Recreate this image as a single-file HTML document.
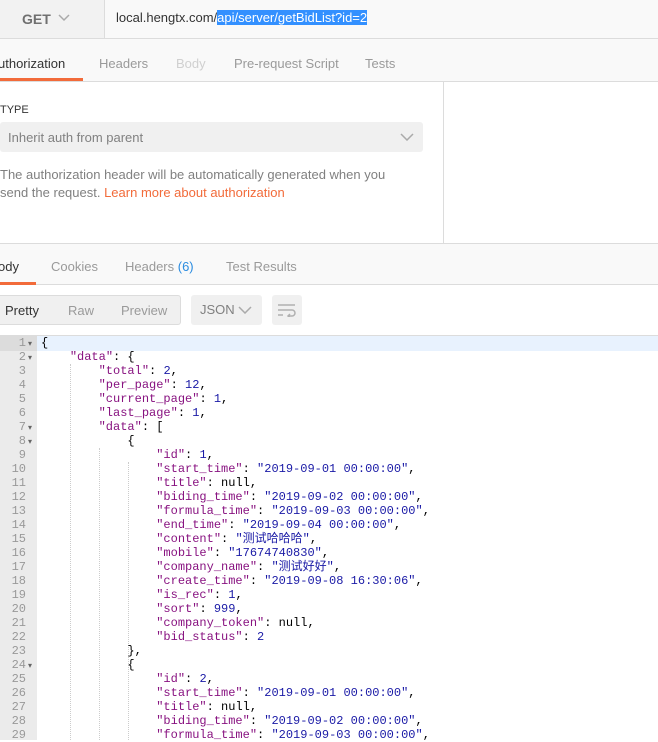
<!DOCTYPE html>
<html><head><meta charset="utf-8"><style>
*{margin:0;padding:0;box-sizing:border-box}
body{width:658px;height:739px;overflow:hidden;background:#fff;font-family:"Liberation Sans","Noto Sans CJK SC",sans-serif;position:relative;color:#505050}
.abs{position:absolute}
.top{left:0;top:0;width:658px;height:39px;background:#f9f9f9;border-bottom:1px solid #dcdcdc}
.get{left:0;top:0;width:105px;height:38px;background:#f2f2f2;border-right:1px solid #dcdcdc;font-size:14px;font-weight:bold;color:#707070}
.url{left:116px;top:10px;font-size:13px;color:#333}
.sel{background:#3390ff;color:#fff}
.tabs{left:0;top:39px;width:658px;height:43px;background:#f9f9f9;border-bottom:1px solid #dcdcdc;font-size:13px}
.tab{position:absolute;top:17px;color:#9a9a9a}
.auth{left:0;top:82px;width:444px;height:162px;border-right:1px solid #dcdcdc}
.rtabs{left:0;top:243px;width:658px;height:42px;background:#f9f9f9;border-top:1px solid #dcdcdc;border-bottom:1px solid #dcdcdc;font-size:13px}
.btn{background:#f0f0f0;border-radius:3px;font-size:13px;color:#9a9a9a}
.ed{left:0;top:335px;width:658px;height:404px;border-top:1px solid #dcdcdc}
.gut{left:0;top:0;width:37px;height:404px;background:#ebebeb}
pre{font-family:"Liberation Mono","Noto Sans CJK SC",monospace;font-size:12px;line-height:14px;color:#000}
.k{color:#881280}.s{color:#1a1aa6}.n{color:#1a1aa6}
.ln{font-family:"Liberation Mono",monospace;font-size:12px;line-height:14px;color:#999;text-align:right;width:26px}
.fold{font-size:8px;color:#666;line-height:14px}
</style></head><body>
<div class="abs top"></div>
<div class="abs get"><span class="abs" style="left:22px;top:11px">GET</span>
<svg class="abs" style="left:58px;top:14px" width="12" height="8"><path d="M1 1l5 5 5-5" fill="none" stroke="#aaa" stroke-width="1.5"/></svg></div>
<div class="abs url">local.hengtx.com/<span class="sel">api/server/getBidList?id=2</span></div>
<div class="abs tabs">
<span class="tab" style="left:-2px;color:#333">uthorization</span>
<div class="abs" style="left:0;top:39px;width:83px;height:3px;background:#f26b3a"></div>
<span class="tab" style="left:99px">Headers</span>
<span class="tab" style="left:176px;color:#d0d0d0">Body</span>
<span class="tab" style="left:234px">Pre-request Script</span>
<span class="tab" style="left:365px">Tests</span>
</div>
<div class="abs auth">
<div class="abs" style="left:0;top:22px;font-size:11px;color:#333">TYPE</div>
<div class="abs btn" style="left:0;top:40px;width:423px;height:30px"><span class="abs" style="left:8px;top:8px;color:#808080">Inherit auth from parent</span>
<svg class="abs" style="left:400px;top:11px" width="14" height="8"><path d="M1 1l6 6 6-6" fill="none" stroke="#aaa" stroke-width="1.5"/></svg></div>
<div class="abs" style="left:0;top:84px;font-size:13px;line-height:18px;color:#808080;width:412px">The authorization header will be automatically generated when you send the request. <span style="color:#f26b3a">Learn more about authorization</span></div>
</div>
<div class="abs rtabs">
<span class="tab" style="left:-2px;top:15px;color:#333">ody</span>
<div class="abs" style="left:0;top:38px;width:36px;height:3px;background:#f26b3a"></div>
<span class="tab" style="left:51px;top:15px">Cookies</span>
<span class="tab" style="left:125px;top:15px">Headers <span style="color:#2b8ce0">(6)</span></span>
<span class="tab" style="left:226px;top:15px">Test Results</span>
</div>
<div class="abs btn" style="left:-3px;top:295px;width:184px;height:30px;border:1px solid #dcdcdc"><span class="abs" style="left:7px;top:7px;color:#333">Pretty</span><span class="abs" style="left:70px;top:7px">Raw</span><span class="abs" style="left:123px;top:7px">Preview</span></div>
<div class="abs btn" style="left:191px;top:295px;width:71px;height:30px"><span class="abs" style="left:9px;top:7px;color:#808080">JSON</span>
<svg class="abs" style="left:47px;top:11px" width="14" height="8"><path d="M1 1l6 6 6-6" fill="none" stroke="#aaa" stroke-width="1.5"/></svg></div>
<div class="abs btn" style="left:272px;top:295px;width:30px;height:30px">
<svg class="abs" style="left:5px;top:8px" width="20" height="14"><path d="M1 2h17M1 7h14a3 3 0 010 6h-4M13 11l-2 2 2 2M1 12h5" fill="none" stroke="#b0b0b0" stroke-width="1.5"/></svg></div>
<div class="abs ed">
<div class="abs" style="left:0;top:0;width:658px;height:15px;background:#e8f2fe"></div>
<div class="abs gut"></div>
<div class="abs" style="left:0;top:0;width:37px;height:15px;background:#dcdcdc"></div>
<div class="abs ln" style="left:0;top:0"><div>1</div><div>2</div><div>3</div><div>4</div><div>5</div><div>6</div><div>7</div><div>8</div><div>9</div><div>10</div><div>11</div><div>12</div><div>13</div><div>14</div><div>15</div><div>16</div><div>17</div><div>18</div><div>19</div><div>20</div><div>21</div><div>22</div><div>23</div><div>24</div><div>25</div><div>26</div><div>27</div><div>28</div><div>29</div></div>
<div class="abs fold" style="left:28px;top:1px">
<div>▾</div><div>▾</div><div>&nbsp;</div><div>&nbsp;</div><div>&nbsp;</div><div>&nbsp;</div><div>▾</div><div>▾</div>
<div>&nbsp;</div><div>&nbsp;</div><div>&nbsp;</div><div>&nbsp;</div><div>&nbsp;</div><div>&nbsp;</div><div>&nbsp;</div><div>&nbsp;</div><div>&nbsp;</div><div>&nbsp;</div><div>&nbsp;</div><div>&nbsp;</div><div>&nbsp;</div><div>&nbsp;</div><div>&nbsp;</div><div>▾</div></div>
<div class="abs" style="left:70px;top:28px;height:376px;border-left:1px dotted #ccc"></div>
<div class="abs" style="left:99px;top:112px;height:292px;border-left:1px dotted #ccc"></div>
<div class="abs" style="left:128px;top:126px;height:278px;border-left:1px dotted #ccc"></div>
<pre class="abs" style="left:41px;top:0">{
    <span class="k">"data"</span>: {
        <span class="k">"total"</span>: <span class="n">2</span>,
        <span class="k">"per_page"</span>: <span class="n">12</span>,
        <span class="k">"current_page"</span>: <span class="n">1</span>,
        <span class="k">"last_page"</span>: <span class="n">1</span>,
        <span class="k">"data"</span>: [
            {
                <span class="k">"id"</span>: <span class="n">1</span>,
                <span class="k">"start_time"</span>: <span class="s">"2019-09-01 00:00:00"</span>,
                <span class="k">"title"</span>: null,
                <span class="k">"biding_time"</span>: <span class="s">"2019-09-02 00:00:00"</span>,
                <span class="k">"formula_time"</span>: <span class="s">"2019-09-03 00:00:00"</span>,
                <span class="k">"end_time"</span>: <span class="s">"2019-09-04 00:00:00"</span>,
                <span class="k">"content"</span>: <span class="s">"测试哈哈哈"</span>,
                <span class="k">"mobile"</span>: <span class="s">"17674740830"</span>,
                <span class="k">"company_name"</span>: <span class="s">"测试好好"</span>,
                <span class="k">"create_time"</span>: <span class="s">"2019-09-08 16:30:06"</span>,
                <span class="k">"is_rec"</span>: <span class="n">1</span>,
                <span class="k">"sort"</span>: <span class="n">999</span>,
                <span class="k">"company_token"</span>: null,
                <span class="k">"bid_status"</span>: <span class="n">2</span>
            },
            {
                <span class="k">"id"</span>: <span class="n">2</span>,
                <span class="k">"start_time"</span>: <span class="s">"2019-09-01 00:00:00"</span>,
                <span class="k">"title"</span>: null,
                <span class="k">"biding_time"</span>: <span class="s">"2019-09-02 00:00:00"</span>,
                <span class="k">"formula_time"</span>: <span class="s">"2019-09-03 00:00:00"</span>,
</pre>
</div>
</body></html>
